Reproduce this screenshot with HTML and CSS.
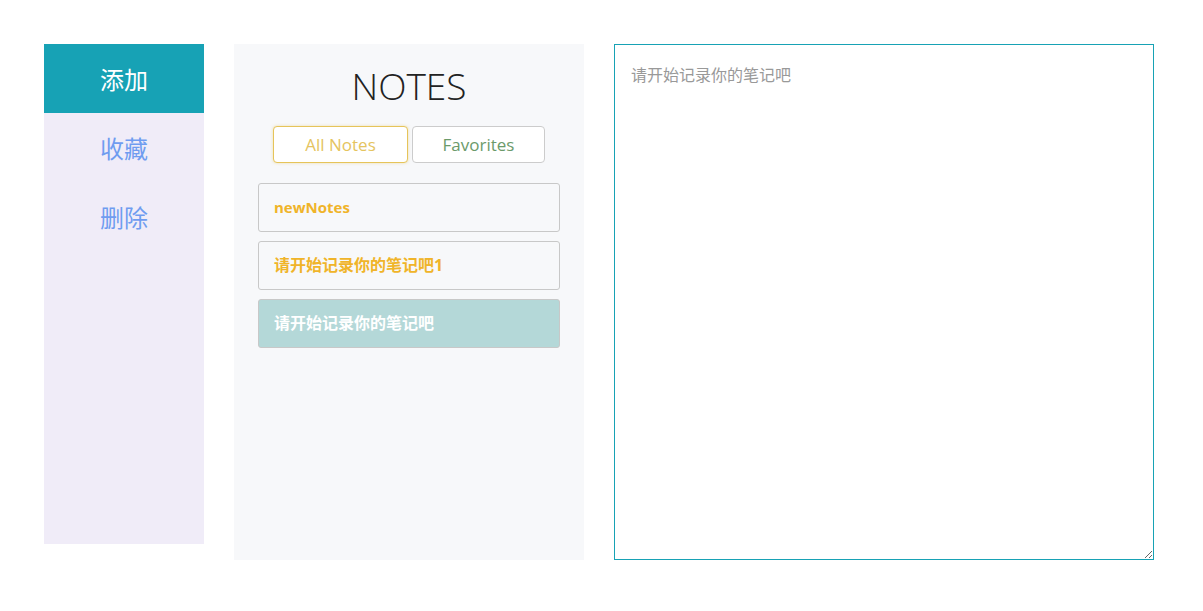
FILE: index.html
```html
<!DOCTYPE html>
<html lang="zh-CN">
<head>
<meta charset="utf-8">
<title>Notes</title>
<link rel="stylesheet" href="styles.css">
</head>
<body>
<div class="app">
  <nav class="toolbar">
    <div class="tool active">添加</div>
    <div class="tool">收藏</div>
    <div class="tool">删除</div>
  </nav>
  <section class="notes-panel">
    <h1 class="title">NOTES</h1>
    <div class="tabs">
      <button class="tab tab-all">All Notes</button>
      <button class="tab tab-fav">Favorites</button>
    </div>
    <ul class="note-list">
      <li class="note">newNotes</li>
      <li class="note cjk">请开始记录你的笔记吧1</li>
      <li class="note cjk selected">请开始记录你的笔记吧</li>
    </ul>
  </section>
  <textarea class="editor" placeholder="请开始记录你的笔记吧"></textarea>
</div>
</body>
</html>
```
FILE: styles.css
```css
* { box-sizing: border-box; }
html, body { margin: 0; padding: 0; background: #fff; }
body {
  font-family: "Noto Sans", "Noto Sans CJK SC", sans-serif;
}
.app {
  display: flex;
  align-items: flex-start;
  gap: 30px;
  padding: 44px 0 0 44px;
}
.toolbar {
  width: 160px;
  height: 500px;
  background: #f0ecf8;
  display: flex;
  flex-direction: column;
}
.tool {
  height: 69px;
  line-height: 69px;
  text-align: center;
  font-size: 24px;
  color: #6f9cf0;
  font-family: "Noto Sans CJK SC", sans-serif;
}
.tool.active {
  background: #17a2b5;
  color: #fff;
}
.notes-panel {
  width: 350px;
  height: 516px;
  background: #f7f8fa;
  padding: 0 24px;
}
.title {
  margin: 0;
  padding-top: 15px;
  height: 82px;
  text-align: center;
  font-family: "Open Sans", sans-serif;
  font-weight: 300;
  font-size: 37px;
  line-height: 54px;
  color: #222;
}
.tabs {
  display: flex;
  justify-content: center;
  gap: 4px;
}
.tab {
  height: 37px;
  border: 1px solid #ccc;
  border-radius: 4px;
  background: #fff;
  font-family: "Open Sans", sans-serif;
  font-size: 17px;
  padding: 0;
}
.tab-all {
  width: 135px;
  color: #e5c45f;
  border-color: #e6c45a;
  box-shadow: 0 0 3px rgba(230, 196, 90, 0.5);
}
.tab-fav {
  width: 133px;
  color: #6b9a6a;
}
.note-list {
  list-style: none;
  margin: 20px 0 0;
  padding: 0;
  display: flex;
  flex-direction: column;
  gap: 9px;
}
.note {
  height: 49px;
  line-height: 47px;
  border: 1px solid #c8c8c8;
  border-radius: 3px;
  padding-left: 15px;
  font-size: 15px;
  font-weight: 700;
  color: #f0b429;
  font-family: "Open Sans", "Noto Sans CJK SC", sans-serif;
}
.note.cjk {
  font-size: 16px;
}
.note.selected {
  background: #b4d8d8;
  color: #fff;
}
.editor {
  width: 540px;
  height: 516px;
  border: 1px solid #17a2b5;
  padding: 17px 16px;
  font-family: "Noto Sans CJK SC", sans-serif;
  font-size: 16px;
  line-height: 24px;
  color: #333;
  outline: none;
  resize: both;
  margin: 0;
}
.editor::placeholder {
  color: #999;
}
```
